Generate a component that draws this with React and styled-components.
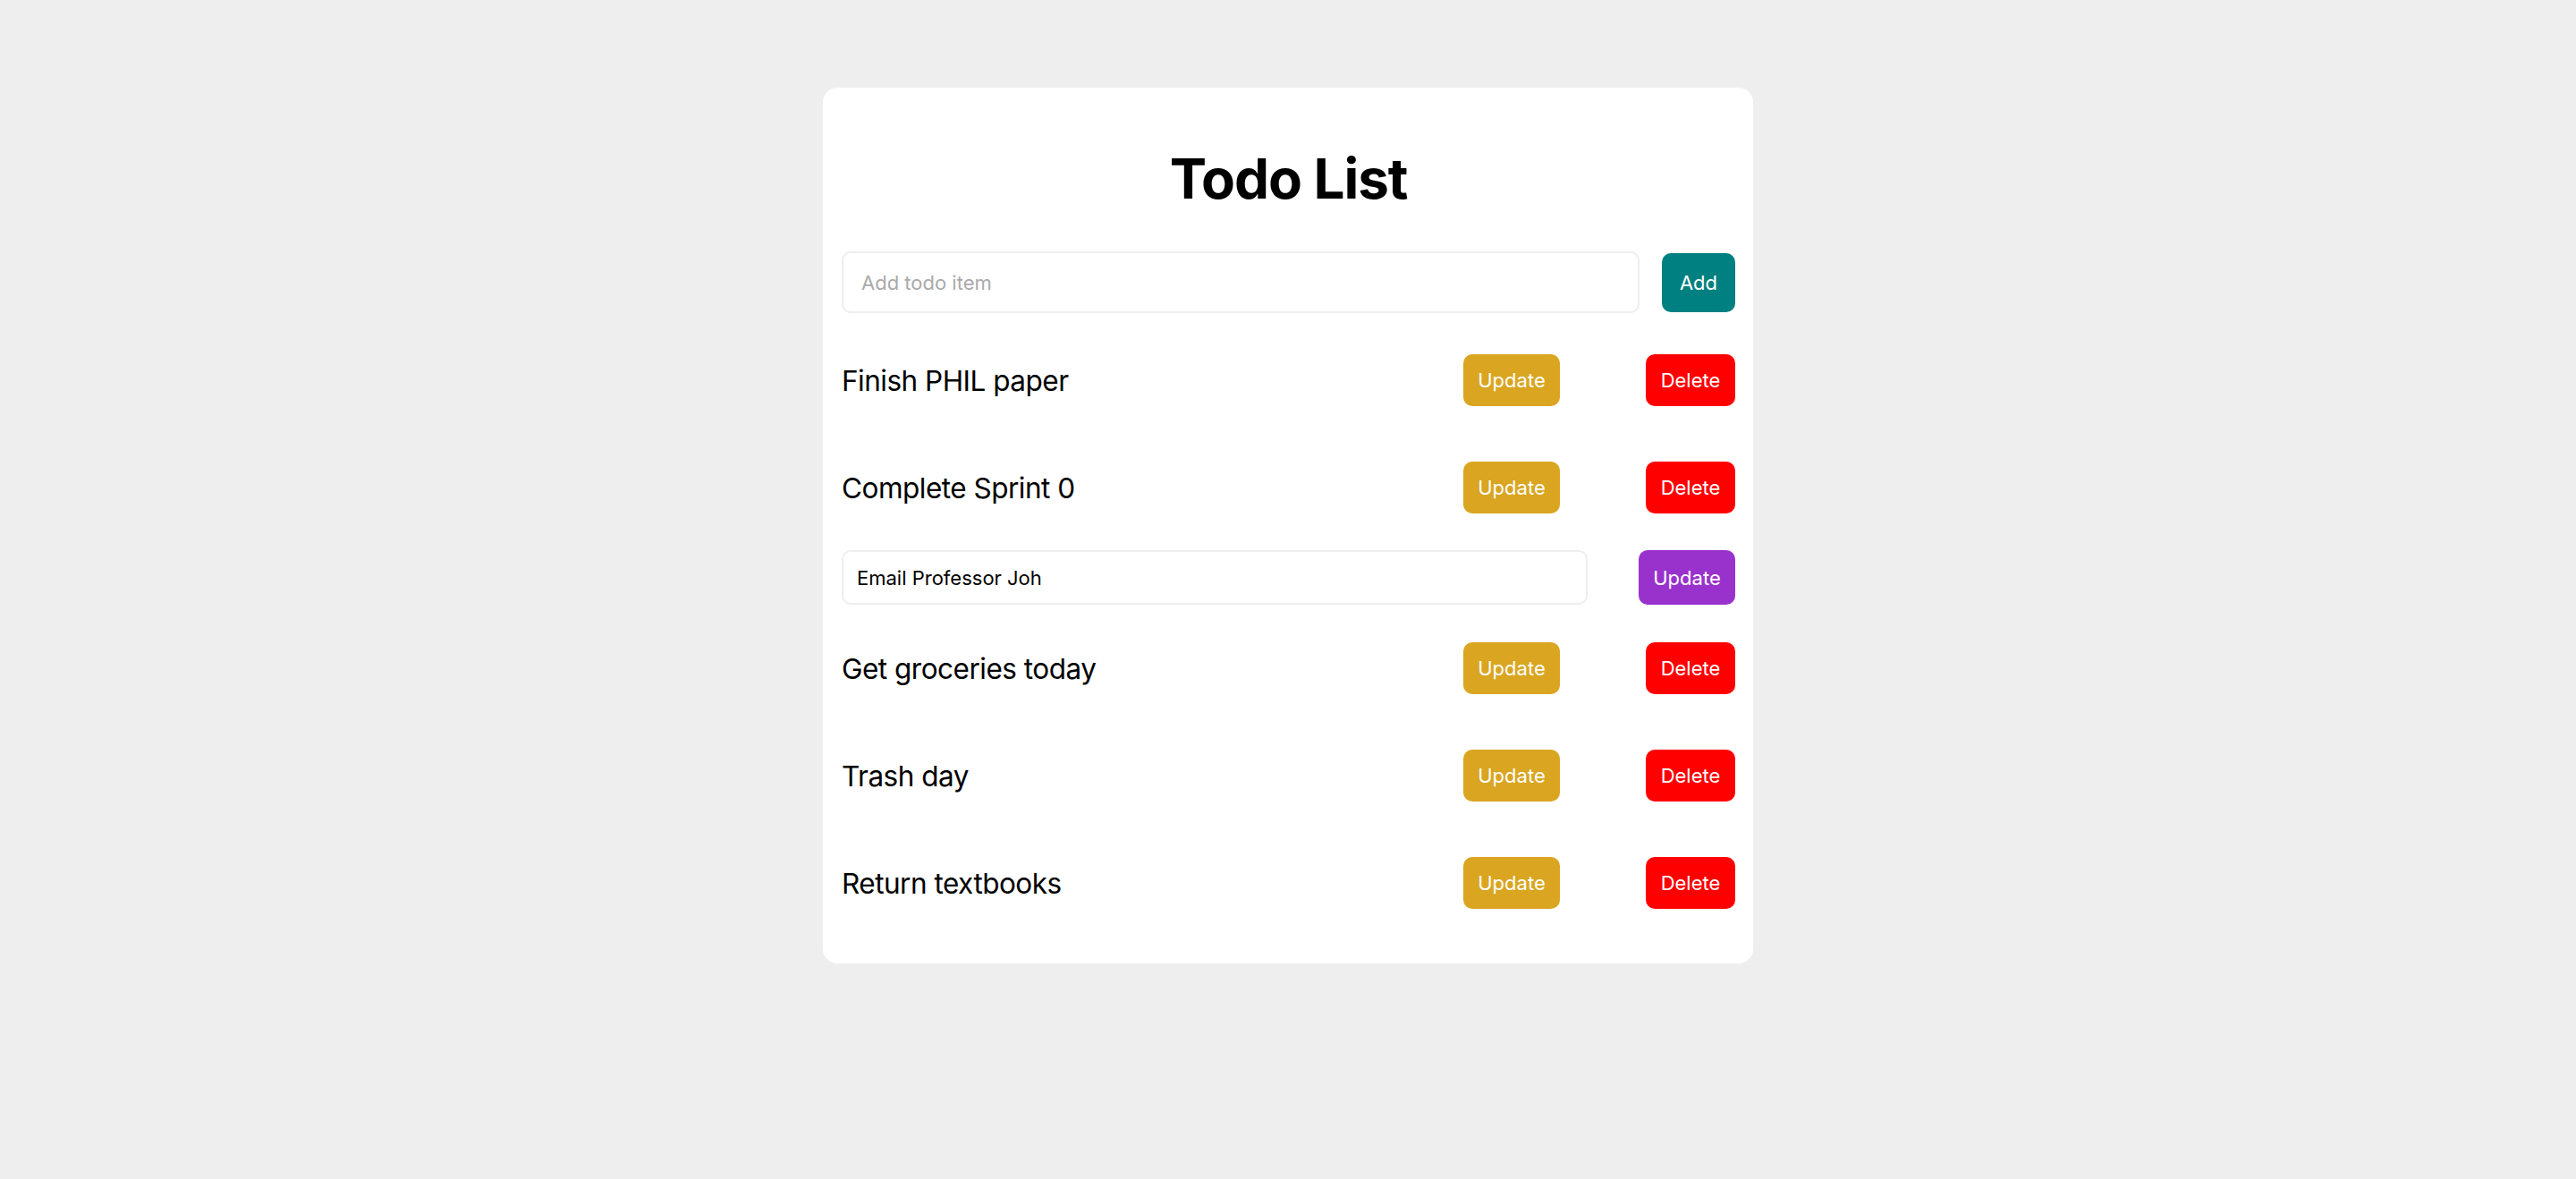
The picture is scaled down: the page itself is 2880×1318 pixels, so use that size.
import React, { useState } from "react";
import styled, { createGlobalStyle } from "styled-components";

const GlobalStyle = createGlobalStyle`
  html, body {
    margin: 0;
    padding: 0;
    background: #eeeeee;
    font-family: Inter, "Noto Sans", "Liberation Sans", sans-serif;
  }
  * { box-sizing: border-box; }
`;

const Page = styled.div`
  min-height: 1318px;
  padding-top: 98px;
  display: flex;
  justify-content: center;
  align-items: flex-start;
`;

const Card = styled.div`
  width: 1040px;
  background: #ffffff;
  border-radius: 16px;
  padding: 20px 20px 41px 21px;
  display: flex;
  flex-direction: column;
`;

const Title = styled.h1`
  margin: 44px 0 44px;
  font-size: 62px;
  line-height: 75px;
  font-weight: 700;
  letter-spacing: -1.1px;
  text-align: center;
  color: #000;
`;

const Form = styled.form`
  display: flex;
  align-items: center;
  gap: 25px;
  margin: 0 0 25px;
`;

const TextInput = styled.input`
  flex: 1;
  min-width: 0;
  height: ${(p) => p.$h}px;
  border: 2px solid #eeeeee;
  border-radius: 10px;
  padding: 0 ${(p) => p.$pad}px;
  font-family: inherit;
  font-size: 22px;
  color: #000;
  outline: none;
  background: #fff;
  &::placeholder { color: #aaaaaa; }
`;

const Button = styled.button`
  flex: none;
  border: none;
  border-radius: 10px;
  background: ${(p) => p.$bg};
  color: #ffffff;
  font-family: inherit;
  font-size: 22px;
  line-height: 26px;
  padding: 0;
  width: ${(p) => p.$w}px;
  height: ${(p) => p.$h}px;
  cursor: pointer;
`;

const List = styled.div`
  display: flex;
  flex-direction: column;
  gap: 21px;
`;

const ItemRow = styled.div`
  display: flex;
  align-items: center;
  padding: 21px 0 20px;
`;

const EditRow = styled.div`
  display: flex;
  align-items: stretch;
  gap: 57px;
  height: 61px;
`;

const ItemText = styled.span`
  flex: 1;
  font-size: 31.5px;
  letter-spacing: -0.5px;
  color: #000;
`;

const Spacer = styled.div`
  width: 96px;
  flex: none;
`;

const todos = [
  { id: 1, text: "Finish PHIL paper" },
  { id: 2, text: "Complete Sprint 0" },
  { id: 3, text: "Email Professor Joh", editing: true },
  { id: 4, text: "Get groceries today" },
  { id: 5, text: "Trash day" },
  { id: 6, text: "Return textbooks" },
];

export default function App() {
  const [value, setValue] = useState("");
  const [edit, setEdit] = useState("Email Professor Joh");
  return (
    <>
      <GlobalStyle />
      <Page>
        <Card>
          <Title>Todo List</Title>
          <Form onSubmit={(e) => e.preventDefault()}>
            <TextInput
              $h={69}
              $pad={20}
              placeholder="Add todo item"
              value={value}
              onChange={(e) => setValue(e.target.value)}
            />
            <Button type="submit" $bg="#008080" $w={82} $h={66}>
              Add
            </Button>
          </Form>
          <List>
            {todos.map((t) =>
              t.editing ? (
                <EditRow key={t.id}>
                  <TextInput
                    $h={61}
                    $pad={15}
                    value={edit}
                    onChange={(e) => setEdit(e.target.value)}
                  />
                  <Button $bg="#9932cc" $w={108} $h={61}>
                    Update
                  </Button>
                </EditRow>
              ) : (
                <ItemRow key={t.id}>
                  <ItemText>{t.text}</ItemText>
                  <Button $bg="#daa520" $w={108} $h={58}>
                    Update
                  </Button>
                  <Spacer />
                  <Button $bg="#ff0000" $w={100} $h={58}>
                    Delete
                  </Button>
                </ItemRow>
              )
            )}
          </List>
        </Card>
      </Page>
    </>
  );
}
